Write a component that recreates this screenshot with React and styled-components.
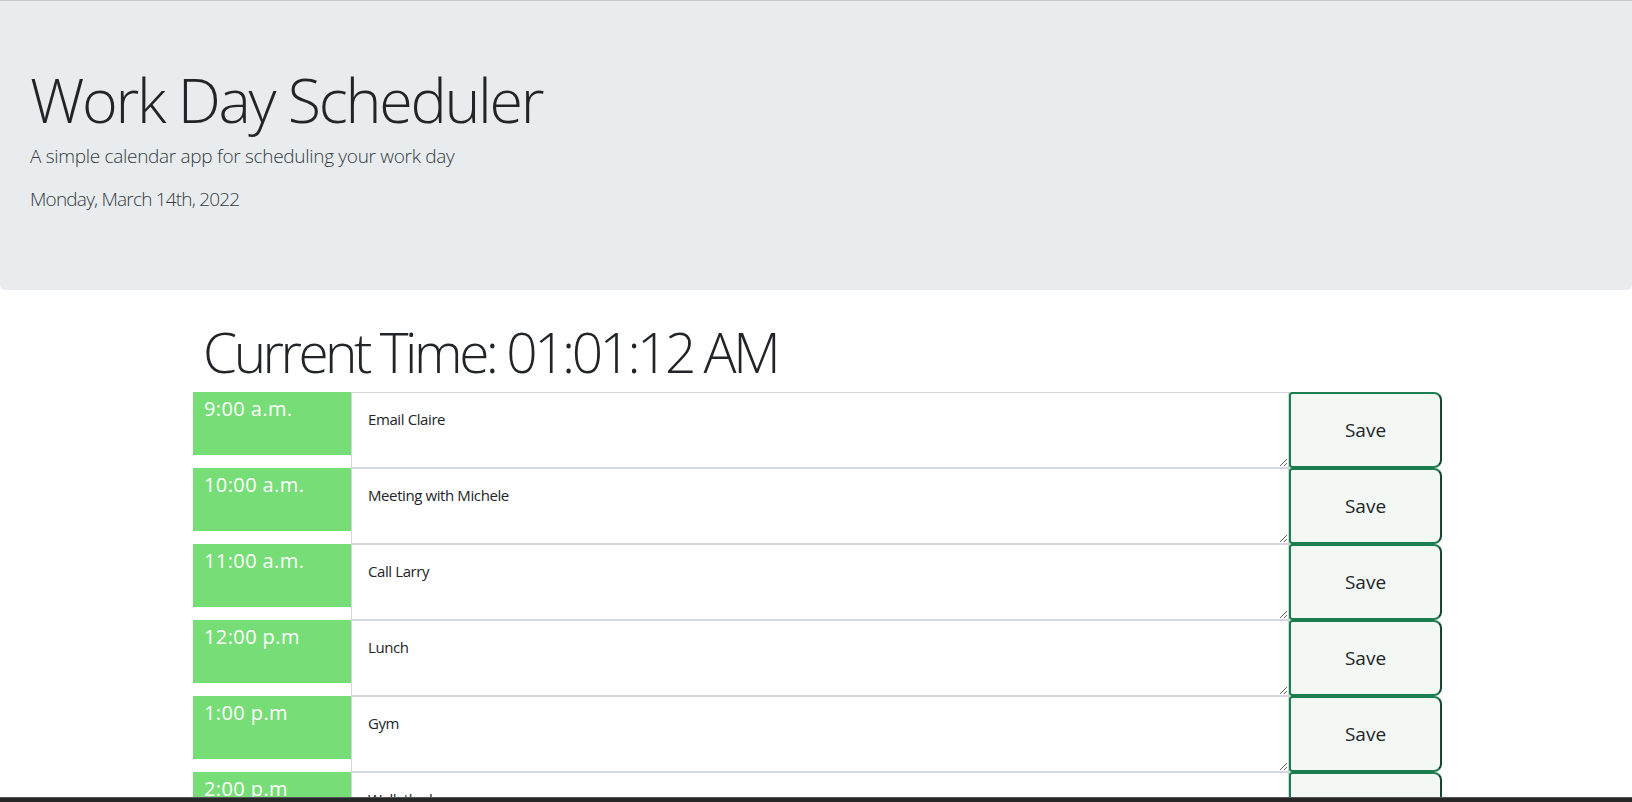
import React from 'react';
import styled, { createGlobalStyle } from 'styled-components';

const GlobalStyle = createGlobalStyle`
    html{
        scrollbar-width:none;
    }
    html::-webkit-scrollbar{
        display:none;
    }
    body{
        margin:0;
        font-family:"Open Sans","Noto Sans",sans-serif;
        color:#212529;
        background:#fff;
    }
`

const Jumbotron = styled.header`
    box-sizing:border-box;
    height:290px;
    padding:62px 30px 0;
    background:#e9ecef;
    border-top:1px solid #c4c8cc;
    border-radius:0 0 5px 5px;
`
const Title = styled.h1`
    margin:0;
    font-size:61px;
    font-weight:300;
    letter-spacing:-2.3px;
    line-height:1.2;
`
const Lead = styled.p`
    margin:${props => props.gap || 0}px 0 0;
    font-size:19px;
    font-weight:300;
    letter-spacing:${props => props.tight ? -0.8 : -0.3}px;
    line-height:1.5;
    color:#343a40;
`
const Container = styled.main`
    width:1249px;
    margin:0 0 0 193px;
`
const Clock = styled.h2`
    margin:29px 0 7px;
    padding-left:10px;
    font-size:55px;
    font-weight:300;
    letter-spacing:-3.5px;
    line-height:1.2;
`
const Row = styled.div`
    display:grid;
    grid-template-columns:158px 1fr 153px;
    height:76px;
`
const Hour = styled.div`
    box-sizing:border-box;
    height:63px;
    padding:2px 11px 0;
    background:#77dd77;
    color:#fff;
    font-size:20px;
    letter-spacing:0.4px;
    line-height:1.5;
`
const Note = styled.textarea`
    box-sizing:border-box;
    height:76px;
    margin:0;
    padding:15px 16px;
    border:1px solid #d3d6de;
    font-family:inherit;
    font-size:15px;
    letter-spacing:-0.4px;
    line-height:1.5;
    color:#212529;
    background:#fff;
    outline:none;
`
const SaveBtn = styled.button`
    box-sizing:border-box;
    height:76px;
    margin:0;
    border:2px solid #1b7e4e;
    border-right-color:#0f4a2c;
    border-radius:3px 8px 8px 3px;
    background:#f3f8f4;
    color:#212529;
    font-family:inherit;
    font-size:19px;
    cursor:pointer;
`
const Taskbar = styled.div`
    position:fixed;
    left:0;
    right:0;
    bottom:0;
    height:4px;
    background:#262626;
    border-top:1px solid #555;
`

const hours = [
    { label:'9:00 a.m.', text:'Email Claire' },
    { label:'10:00 a.m.', text:'Meeting with Michele' },
    { label:'11:00 a.m.', text:'Call Larry' },
    { label:'12:00 p.m', text:'Lunch' },
    { label:'1:00 p.m', text:'Gym' },
    { label:'2:00 p.m', text:'Walk the lamp' },
    { label:'3:00 p.m', text:'' },
    { label:'4:00 p.m', text:'' },
    { label:'5:00 p.m', text:'' }
]

export default function App() {
    return (
        <>
            <GlobalStyle />
            <Jumbotron>
                <Title>Work Day Scheduler</Title>
                <Lead gap={6}>A simple calendar app for scheduling your work day</Lead>
                <Lead gap={14} tight>Monday, March 14th, 2022</Lead>
            </Jumbotron>
            <Container>
                <Clock>Current Time: 01:01:12 AM</Clock>
                {
                    hours.map(item => (
                        <Row key={item.label}>
                            <Hour>{item.label}</Hour>
                            <Note defaultValue={item.text} />
                            <SaveBtn>Save</SaveBtn>
                        </Row>
                    ))
                }
            </Container>
            <Taskbar />
        </>
    );
}
